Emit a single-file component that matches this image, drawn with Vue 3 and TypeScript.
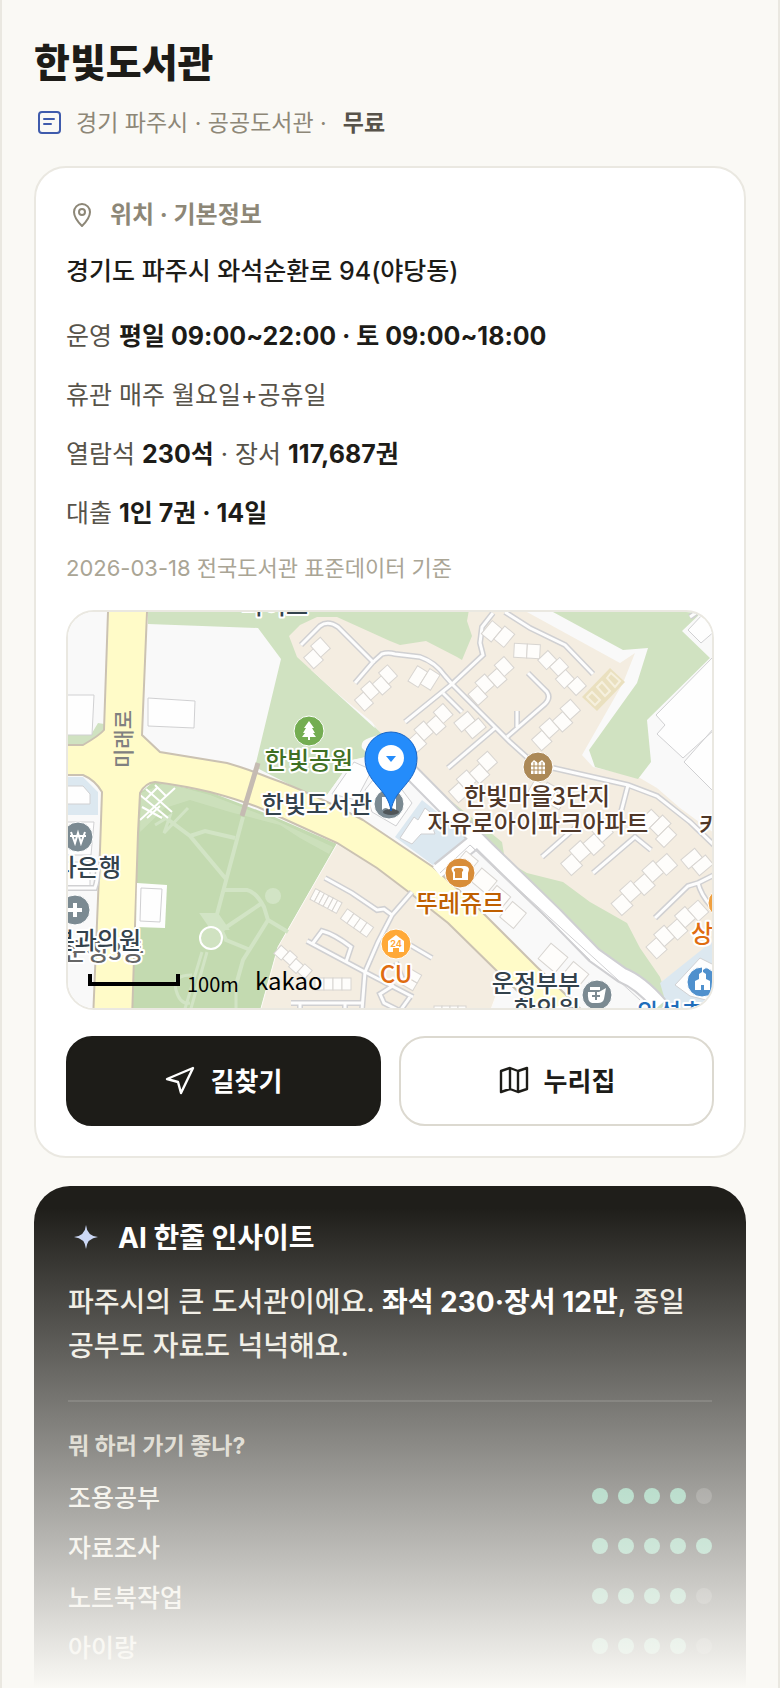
<script setup lang="ts">
interface Purpose {
  name: string
  score: number
}

interface Block {
  x: number
  y: number
  angle: number
  count: number
  w: number
  h: number
  step: number
}

const purposes: Purpose[] = [
  { name: '조용공부', score: 4 },
  { name: '자료조사', score: 5 },
  { name: '노트북작업', score: 4 },
  { name: '아이랑', score: 4 },
]

const block = (x: number, y: number, angle: number, count: number, w = 13, h = 15, step = 4): Block => ({
  x, y, angle, count, w, h, step,
})

const blocks: Block[] = [
  block(317, 653, -42, 2, 13, 15),
  block(376, 688, -42, 4, 12, 15),
  block(424, 678, 32, 2, 12, 18),
  block(498, 634, 40, 2, 13, 17),
  block(491, 681, -42, 4, 13, 15),
  block(527, 651, 3, 2, 13, 14, 0),
  block(562, 673, 47, 4, 13, 14),
  block(430, 728, -42, 4, 13, 15),
  block(470, 725, 50, 2, 12, 18),
  block(556, 725, -42, 4, 14, 15),
  block(473, 777, -42, 4, 14, 15),
  block(548, 793, 30, 3, 12, 14),
  block(587, 848, -42, 4, 15, 16),
  block(643, 883, -42, 5, 15, 16),
  block(676, 928, -42, 5, 14, 16),
  block(659, 827, 45, 3, 12, 18),
  block(697, 862, 50, 2, 12, 18),
  block(326, 901, 28, 6, 5, 12, 0),
  block(357, 923, 35, 4, 8, 12, 0),
  block(293, 962, 42, 4, 10, 11, 2),
  block(333, 984, 0, 4, 9, 12, 0),
  block(468, 861, 40, 1, 16, 13, 0),
  block(484, 881, 40, 1, 20, 17, 0),
  block(499, 897, 40, 1, 18, 15, 0),
  block(513, 915, 40, 1, 18, 20, 0),
  block(553, 958, 40, 1, 22, 20, 0),
  block(576, 974, 40, 1, 20, 16, 0),
  block(412, 980, -60, 2, 9, 12, 0),
  block(450, 1010, 0, 4, 8, 8, 0),
]

const lanes: string[] = [
  'M301 645L320 626Q328 620 338 627L373 662L355 683',
  'M373 662L382 654Q388 652 395 654L420 657Q435 662 445 676L452 684L510 742L530 760',
  'M405 722L452 684L483 655L480 643L482 627L493 613',
  'M505 612L530 628L565 645L593 674',
  'M443 693L462 712',
  'M448 768L495 728',
  'M528 673L547 692Q551 698 545 704L507 737M517 711L517 727',
  'M553 768L628 785L657 796L690 822L714 845M628 785L621 812',
  'M542 857L575 828M593 873L635 837L651 850',
  'M655 918L688 886L698 883L714 875M698 883Q701 895 711 906',
  'M325 878L352 893L377 910L384 909L392 915',
  'M412 892L392 915L378 942L365 972L362 1010',
  'M307 941L365 972L413 997M313 943L322 931Q334 934 351 947L346 962',
  'M291 1003L362 1003M300 1003L300 1012M345 1003L345 1012',
  'M410 945L432 958',
  'M394 985L380 994L384 1003L400 1011L410 997',
  'M396 962L402 978M64 888L95 888Q98 880 98 865',
  'M690 617L700 610',
]
</script>

<template>
  <main class="page">
    <header class="head">
      <h1>한빛도서관</h1>
      <p class="meta">
        <svg class="meta-icon" viewBox="0 0 30 32" fill="none" stroke="#3f5bac" stroke-width="2" stroke-linecap="round" aria-hidden="true">
          <rect x="5" y="5" width="21" height="21" rx="3" />
          <path d="M10 12H20M10 17H17" />
        </svg>
        <span>경기 파주시 · 공공도서관 ·</span>
        <strong>무료</strong>
      </p>
    </header>

    <section class="card">
      <h2 class="card-title">
        <svg viewBox="0 0 32 32" fill="none" stroke="#8d8777" stroke-width="2" aria-hidden="true">
          <path d="M16 27Q8 19 8 13A8 8 0 0 1 24 13Q24 19 16 27Z" stroke-linejoin="round" />
          <circle cx="16" cy="13" r="3" />
        </svg>
        위치 · 기본정보
      </h2>
      <p class="address">경기도 파주시 와석순환로 94(야당동)</p>
      <ul class="facts">
        <li>운영 <b>평일 09:00~22:00 · 토 09:00~18:00</b></li>
        <li>휴관 매주 월요일+공휴일</li>
        <li>열람석 <b>230석</b> · 장서 <b>117,687권</b></li>
        <li>대출 <b>1인 7권 · 14일</b></li>
      </ul>
      <p class="source">2026-03-18 전국도서관 표준데이터 기준</p>

      <div class="map">
        <svg viewBox="68 612 644 396" preserveAspectRatio="xMidYMid slice" role="img" aria-label="한빛도서관 주변 지도">
          <rect x="0" y="560" width="780" height="500" fill="#f9f9f9" />
          <!-- land -->
          <path fill="#d0e2c1" d="M148 612V624L258 628L281 659L255 767L310 795L327 795L352 760L378 755L388 740L333 690L297 657L289 636L380 600L480 600L470 612Z" />
          <path fill="#d0e2c1" d="M289 600H480V670H289Z" />
          <path fill="#f4ede1" d="M470 604L467 621L472 636L462 660L457 657L426 641L400 645L390 641L337 617L317 617L300 625L289 636L297 657L333 690L372 722L384 738L415 770L443 797L505 860L590 943L665 1010L660 983L714 943L714 833L680 808L657 788L640 778L593 767L582 755L623 683L635 653L620 663L527 612V604Z" />
          <path fill="#d0e2c1" d="M553 612L623 650L648 648L637 683L589 750L595 767L638 779L651 762L647 720L710 658L682 631L702 612Z" />
          <path fill="#d0e2c1" d="M374 726L415 768L450 800L502 842L505 860L527 873L563 882L590 902L627 923L640 948L660 977L667 997L668 1010H655L590 943L517 870L445 805L380 740Z" />
          <path fill="#f9f9f9" d="M362 748Q360 741 369 738L378 735L440 790L430 860L327 795L352 760L370 756Z" />
          <path fill="#c3dab0" d="M153 782L210 792L270 815L337 844L278 947L260 1012H132L138 833L140 793Z" />
          <path fill="#d0e2c1" d="M165 783L210 795L275 820L333 847L329 854L300 838L280 825L230 812L190 800L165 808L140 832L141 793Z" opacity=".7" />
          <path fill="#f4ede1" stroke="#fcfaf6" stroke-width="1" d="M337 844L377 868L410 893L448 923L503 977L500 985L490 1012H260L278 947Z" />
          <path fill="#dce8f0" d="M395 837L422 800L470 838L433 865ZM68 777H83L98 792V815H68ZM660 983L714 940V1010H668Z" />
          <path fill="#d0e2c1" d="M68 732L92 733L98 723L104 724V733L84 745H68Z" />
          <!-- park paths -->
          <g fill="none" stroke="#d2e4c5" stroke-width="4">
            <path d="M243 817L216 918M162 815L190 836L226 879M190 836L205 831L235 838M225 890H247Q256 892 264 907L268 920L288 932M222 930L262 903M268 920L243 960L236 985M216 918L226 940L248 949" />
            <path d="M207 952L190 1012M202 952L184 1012M236 985V1012M192 975Q172 975 176 990T190 1003M155 825L170 816L164 833L188 808" stroke-width="3" />
            <path d="M203 915H217L226 928L212 928Z" fill="#d2e4c5" />
          </g>
          <circle cx="273" cy="896" r="8" fill="#d2e4c5" />
          <circle cx="211" cy="938" r="11" fill="#d0e2c1" stroke="#fff" stroke-width="2" />
          <path stroke="#fff" stroke-width="2" fill="none" d="M140 795L168 818M146 789L172 812M155 785L166 796M140 820L175 788M145 800L158 787M147 818L160 806M142 807L162 818" />
          <!-- main roads -->
          <path fill="#fffbc8" stroke="#cbc2b2" stroke-width="2" d="M109 600L108 612L104 730Q100 735 83 745H50V775H83Q95 780 102 792L100 850L93 1020H132L138 833L140 793Q145 783 155 782Q185 786 210 792Q240 800 260 808L337 843L377 868L410 893L448 923L503 977L545 1018L590 1018L537 967L470 900L433 867L363 820Q310 792 270 778Q245 768 227 763L160 752L142 735L147 612V600Z" />
          <path d="M258 763L242 816" stroke="#c5bbb2" stroke-width="5" />
          <g fill="none" stroke-linejoin="round">
            <path stroke="#cfcfd2" stroke-width="17" d="M395 756L487 849L555 915L594 955L622 975Q640 982 660 1005M474 842L439 870" />
            <path stroke="#fff" stroke-width="13" d="M395 756L487 849L555 915L594 955L622 975Q640 982 660 1005M474 842L437 872" />
          </g>
          <!-- white plots -->
          <g fill="#fefefe" stroke="#d0d0d2" stroke-width="1">
            <path d="M148 698L195 701L194 728L148 726ZM60 695H94L92 735H60ZM66 786H83L90 794V804H66ZM64 822H94L91 855H66ZM64 880V888H90V862H66" />
            <path stroke="none" d="M137 883L167 885L165 928L136 927Z" />
            <path d="M141 888L162 889L160 922L140 921Z" />
            <path d="M656 715L714 656V730L683 758L657 734L665 725ZM684 762L714 728V792ZM688 630L703 614L716 630L701 643Z" />
            <path d="M332 794L354 762L372 770L356 800ZM365 790L384 766L412 803L396 826L372 812Z" />
            <path d="M400 838L414 817L418 820L425 808L436 817L431 823L435 834L421 834L412 844Z" />
            <path d="M675 985L700 958L714 965V1002L690 996Z" />
            <path fill="none" d="M440 873L470 845L640 1000M470 845L590 960" />
          </g>
          <g fill="none" stroke-linecap="butt">
            <path v-for="(lane, i) in lanes" :key="'a' + i" :d="lane" stroke="#d0d0d2" stroke-width="6" />
            <path v-for="(lane, i) in lanes" :key="'b' + i" :d="lane" stroke="#fdfdfd" stroke-width="3" />
          </g>
          <g fill="#fefdfb" stroke="#d8d5d1" stroke-width="1">
            <g v-for="(b, i) in blocks" :key="'c' + i" :transform="`translate(${b.x} ${b.y}) rotate(${b.angle})`">
              <rect
                v-for="n in b.count"
                :key="n"
                :x="(n - 1 - b.count / 2) * b.w"
                :y="-b.h / 2 + (n % 2 ? b.step : -b.step) / 2"
                :width="b.w"
                :height="b.h"
              />
            </g>
          </g>
          <path fill="#eae0bf" d="M582 697L610 668L625 682L597 711Z" />
          <path fill="none" stroke="#f6f0de" stroke-width="2" d="M587 697L592 692L600 700L595 705ZM597 687L602 682L610 691L605 696ZM607 678L611 673L620 681L615 687Z" />

          <!-- place markers -->
          <g stroke="#fff" stroke-width="1">
            <circle cx="309" cy="731" r="15" fill="#74ad52" />
            <circle cx="538" cy="767" r="15" fill="#ac8957" />
            <circle cx="460" cy="873" r="15" fill="#d88d39" />
            <circle cx="396" cy="944" r="15" fill="#ffa938" />
            <circle cx="389" cy="804" r="15" fill="#7b8a92" />
            <circle cx="597" cy="995" r="15" fill="#7b8a92" />
            <circle cx="78" cy="837" r="15" fill="#7b8a92" />
            <circle cx="75" cy="910" r="15" fill="#7b8a92" />
            <circle cx="702" cy="982" r="15" fill="#4f90cd" />
            <circle cx="723" cy="903" r="15" fill="#f0a040" />
          </g>
          <g fill="#fff">
            <path d="M309 721L314 728H312L315 733H313L316 737H310V740H308V737H302L305 733H303L306 728H304Z" />
            <path d="M531 774V763L534 760L538 763L542 760L545 763V774Z" />
            <path d="M453 880V873Q449 867 455 866H465Q471 867 468 873V880Z" />
            <path d="M388 952V941L396 935L404 941V952H399V948H393V952Z" />
            <path d="M382 797H396V810Q391 806 389 810Q386 806 382 810Z" />
            <path d="M73 903H77V908H82V912H77V917H73V912H68V908H73Z" />
            <path d="M695 990V981L699 979V974L702 972V966L706 968L703 970V972L706 974V979L710 981V990H704V985H701V990Z" />
            <path d="M588 992H599L606 988L604 999Q603 1003 598 1003H592Q587 1002 588 992ZM590 987H600V990H590Z" />
          </g>
          <path stroke="#ac8957" stroke-width="1" d="M531 766H545M531 770H545M534 762V774M538 762V774M542 762V774" />
          <path fill="#d88d39" d="M455 878V872Q452 869 456 868H461Q465 869 462 872V878Z" />
          <path stroke="#7b8a92" stroke-width="2" d="M596 992V1000M592 996H600" />
          <path stroke="#fff" stroke-width="2" fill="none" d="M71 832L75 843L78 833L81 843L85 832M70 836H86" />
          <text x="396" y="947" class="tiny">24</text>

          <g class="label">
            <text x="275" y="614" text-anchor="middle" fill="#33424c">파이프</text>
            <text x="144" y="960" text-anchor="end" fill="#666">운정3동</text>
            <text x="309" y="769" text-anchor="middle" fill="#3f7023">한빛공원</text>
            <text x="317" y="813" text-anchor="middle" fill="#33424c">한빛도서관</text>
            <text x="537" y="805" text-anchor="middle" fill="#4f3728">한빛마을3단지</text>
            <text x="538" y="832" text-anchor="middle" fill="#4f3728">자유로아이파크아파트</text>
            <text x="699" y="834" fill="#4f3728">카</text>
            <text x="460" y="912" text-anchor="middle" fill="#bf5f00">뚜레쥬르</text>
            <text x="396" y="983" text-anchor="middle" fill="#e06c10">CU</text>
            <text x="691" y="942" fill="#e06c10">상</text>
            <text x="536" y="992" text-anchor="middle" fill="#33424c">운정부부</text>
            <text x="580" y="1018" text-anchor="end" fill="#33424c">한의원</text>
            <text x="637" y="1021" fill="#1f6dbb">와석초</text>
            <text x="121" y="876" text-anchor="end" fill="#33424c">나은행</text>
            <text x="141" y="949" text-anchor="end" fill="#33424c">분과의원</text>
            <text class="street" transform="translate(131 739) rotate(-90)" text-anchor="middle" fill="#808080">미래로</text>
          </g>

          <!-- selected place pin -->
          <ellipse cx="391" cy="812" rx="8" ry="3" fill="#333" opacity=".6" />
          <path fill="#248cfb" stroke="#1765c6" stroke-width="1" d="M391 811C388 788 365 783 365 758A26 26 0 0 1 417 758C417 783 394 788 391 811Z" />
          <circle cx="391" cy="758" r="13" fill="#fff" />
          <path fill="#248cfb" d="M386 756H396L391 762Z" />

          <path d="M90 974V984H178V974" fill="none" stroke="#000" stroke-width="4" />
          <text x="187" y="992" class="scale">100m</text>
          <text x="255" y="990" class="brand">kakao</text>
        </svg>
      </div>

      <div class="actions">
        <button type="button" class="action primary">
          <svg viewBox="0 0 32 32" fill="none" stroke="currentColor" stroke-width="2.400" stroke-linejoin="round" aria-hidden="true">
            <path d="M28 5L2 16L13 19L16 30Z" />
          </svg>
          길찾기
        </button>
        <button type="button" class="action">
          <svg viewBox="0 0 32 32" fill="none" stroke="currentColor" stroke-width="2.400" stroke-linejoin="round" aria-hidden="true">
            <path d="M3 8L12 5L20 8L29 5V26L20 29L12 26L3 29ZM12 5V26M20 8V29" />
          </svg>
          누리집
        </button>
      </div>
    </section>

    <section class="insight">
      <h2 class="insight-title">
        <svg viewBox="0 0 36 36" fill="#c9d6f5" aria-hidden="true">
          <path d="M18 5Q19 16 30 17Q19 18 18 29Q17 18 6 17Q17 16 18 5Z" />
        </svg>
        AI 한줄 인사이트
      </h2>
      <p class="summary">파주시의 큰 도서관이에요. <b>좌석 230·장서 12만</b>, 종일 공부도 자료도 넉넉해요.</p>
      <div class="fit">
        <h3>뭐 하러 가기 좋나?</h3>
        <ul>
          <li v-for="p in purposes" :key="p.name">
            <span>{{ p.name }}</span>
            <span class="dots" role="img" :aria-label="`5점 중 ${p.score}점`">
              <i v-for="n in 5" :key="n" :class="{ on: n <= p.score }"></i>
            </span>
          </li>
        </ul>
      </div>
    </section>
    <div class="fade"></div>
  </main>
</template>

<style>
body {
  margin: 0;
  background: #faf9f5;
}
</style>

<style scoped>
.page {
  position: relative;
  box-sizing: border-box;
  height: 100vh;
  overflow: hidden;
  padding: 38px 32px 0;
  border: solid #eae8e1;
  border-width: 0 2px;
  background: #faf9f5;
  color: #1d1c18;
  font-family: Inter, "Noto Sans CJK KR", sans-serif;
}
h1, h2, h3, p, ul {
  margin: 0;
  padding: 0;
}
ul {
  list-style: none;
}
h1 {
  font-size: 39px;
  line-height: 50px;
  font-weight: 800;
}
.meta {
  display: flex;
  align-items: center;
  gap: 12px;
  margin-top: 19px;
  font-size: 23px;
  line-height: 32px;
  color: #8d8777;
}
.meta-icon {
  width: 30px;
  height: 32px;
}
.meta strong {
  margin-left: 4px;
  color: #57534a;
}
.card {
  margin-top: 27px;
  padding: 30px;
  border: 2px solid #eae8e1;
  border-radius: 32px;
  background: #fff;
}
.card-title {
  display: flex;
  align-items: center;
  gap: 12px;
  font-size: 24px;
  line-height: 34px;
  color: #8d8777;
}
.card-title svg {
  width: 32px;
  height: 32px;
}
.address {
  margin-top: 19px;
  font-size: 25px;
  font-weight: 500;
  line-height: 40px;
}
.facts {
  display: flex;
  flex-direction: column;
  gap: 19px;
  margin-top: 25px;
  font-size: 25px;
  line-height: 40px;
  color: #57534a;
}
.facts b {
  color: #1d1c18;
}
.source {
  margin-top: 20px;
  font-size: 22px;
  line-height: 30px;
  color: #aaa595;
}
.map {
  margin-top: 27px;
  overflow: hidden;
  border: 2px solid #eae8e1;
  border-radius: 28px;
}
.map svg {
  display: block;
  width: 100%;
}
.label {
  font: 500 24px "Noto Sans CJK KR", sans-serif;
  stroke: #fff;
  stroke-width: 4px;
  stroke-linejoin: round;
  paint-order: stroke;
}
.street {
  font-size: 21px;
  stroke: none;
}
.tiny {
  font: 700 9px Inter, sans-serif;
  text-anchor: middle;
  fill: #ffa938;
}
.scale {
  font: 400 20px "Noto Sans CJK KR", sans-serif;
}
.brand {
  font: 400 24px "Noto Sans CJK KR", sans-serif;
}
.actions {
  display: flex;
  gap: 18px;
  margin-top: 26px;
}
.action {
  display: flex;
  flex: 1;
  align-items: center;
  justify-content: center;
  gap: 14px;
  box-sizing: border-box;
  height: 90px;
  padding: 0 0 4px;
  border: 2px solid #dcd9d0;
  border-radius: 26px;
  background: #fff;
  color: #1d1c18;
  font: 700 26px Inter, "Noto Sans CJK KR", sans-serif;
}
.action svg {
  width: 32px;
  height: 32px;
}
.primary {
  border-color: #1d1c18;
  background: #1d1c18;
  color: #fff;
}
.insight {
  margin-top: 28px;
  padding: 34px 34px 80px;
  border-radius: 36px;
  background: #1f1e1a;
  color: #efece2;
}
.insight-title {
  display: flex;
  align-items: center;
  gap: 14px;
  font-size: 28px;
  line-height: 34px;
  color: #fff;
}
.insight-title svg {
  width: 36px;
  height: 36px;
}
.summary {
  margin-top: 24px;
  font-size: 28px;
  font-weight: 500;
  line-height: 44px;
}
.summary b {
  color: #fff;
}
.fit {
  margin-top: 32px;
  padding-top: 28px;
  border-top: 2px solid rgba(255, 255, 255, .12);
}
h3 {
  font-size: 23px;
  line-height: 32px;
  color: #c9c5b8;
}
.fit ul {
  margin-top: 9px;
}
.fit li {
  display: flex;
  align-items: center;
  justify-content: space-between;
  height: 50px;
  font-size: 25px;
  font-weight: 500;
}
.dots {
  display: flex;
  gap: 10px;
}
.dots i {
  width: 16px;
  height: 16px;
  border-radius: 50%;
  background: rgba(255, 255, 255, .18);
}
.dots .on {
  background: #62b894;
}
.fade {
  position: absolute;
  right: 0;
  bottom: 0;
  left: 0;
  height: 480px;
  background: linear-gradient(rgba(250, 249, 245, 0), #faf9f5);
  pointer-events: none;
}
</style>
